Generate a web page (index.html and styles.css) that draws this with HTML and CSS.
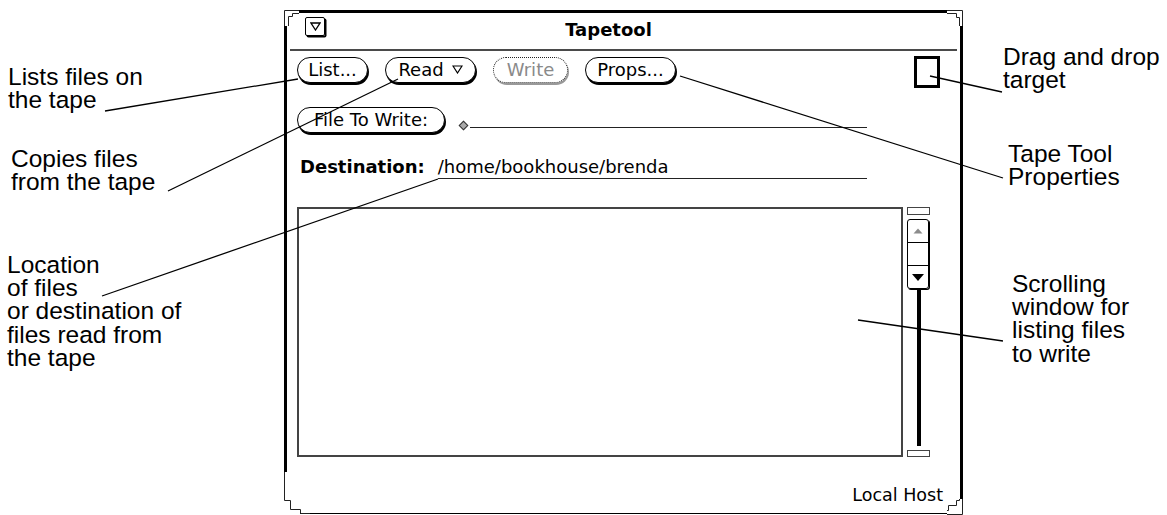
FILE: index.html
```html
<!DOCTYPE html>
<html lang="en">
<head>
    <meta charset="UTF-8">
    <title>Tapetool</title>
    <link rel="stylesheet" href="styles.css">
</head>
<body>
<div class="page">

    <div class="notes notes-left">
        <p class="note note-list">Lists files on<br>the tape</p>
        <p class="note note-read">Copies files<br>from the tape</p>
        <p class="note note-dest">Location<br>of files<br>or destination of<br>files read from<br>the tape</p>
    </div>

    <div class="window">
        <div class="titlebar">
            <span class="menu-mark">
                <svg width="11" height="9" viewBox="0 0 11 9"><polygon points="1,1 10,1 5.5,8" fill="none" stroke="#000" stroke-width="1.3"/></svg>
            </span>
            <span class="title">Tapetool</span>
        </div>
        <div class="rule"></div>

        <div class="controls">
            <button class="btn btn-list">List...</button>
            <button class="btn btn-read">Read
                <svg class="btn-arrow" width="11" height="9" viewBox="0 0 11 9"><polygon points="1,1 10,1 5.5,8" fill="none" stroke="#000" stroke-width="1.2"/></svg>
            </button>
            <button class="btn btn-write">Write</button>
            <button class="btn btn-props">Props...</button>
            <span class="drop-target"></span>
        </div>

        <div class="file-row">
            <button class="btn btn-file">File To Write:</button>
            <span class="diamond"></span>
            <span class="field"></span>
        </div>

        <div class="dest-row">
            <span class="dest-label">Destination:</span>
            <span class="dest-value">/home/bookhouse/brenda</span>
        </div>

        <div class="list-area">
            <div class="listbox"></div>
            <div class="scrollbar">
                <span class="anchor"></span>
                <div class="elevator">
                    <span class="cell">
                        <svg width="10" height="6" viewBox="0 0 10 6"><polygon points="5,0.5 9.5,5.5 0.5,5.5" fill="#8c8c8c"/></svg>
                    </span>
                    <span class="cell"></span>
                    <span class="cell">
                        <svg width="12" height="7" viewBox="0 0 12 7"><polygon points="0,0 12,0 6,7" fill="#000"/></svg>
                    </span>
                </div>
                <span class="cable"></span>
                <span class="anchor anchor-bottom"></span>
            </div>
        </div>

        <div class="footer">Local Host</div>
    </div>

    <div class="notes notes-right">
        <p class="note note-drag">Drag and drop<br>target</p>
        <p class="note note-props">Tape Tool<br>Properties</p>
        <p class="note note-scroll">Scrolling<br>window for<br>listing files<br>to write</p>
    </div>

    <!-- leader lines and window corners -->
    <svg class="leaders" width="1167" height="515" viewBox="0 0 1167 515">
        <g stroke="#000" stroke-width="1.3" fill="none">
            <line x1="105" y1="111" x2="298" y2="79"/>
            <line x1="168" y1="191" x2="398" y2="79"/>
            <line x1="102" y1="296" x2="438" y2="179"/>
            <line x1="930" y1="76" x2="1002" y2="92"/>
            <line x1="680" y1="76" x2="1003" y2="178"/>
            <line x1="858" y1="320" x2="1003" y2="341"/>
        </g>
        <g fill="#fff" stroke="none">
            <rect x="283" y="9" width="16" height="17"/>
            <rect x="947" y="9" width="17" height="17"/>
            <rect x="283" y="472" width="5" height="43"/>
            <rect x="283" y="499" width="17" height="16"/>
            <rect x="947" y="499" width="17" height="16"/>
        </g>
        <g stroke="#222" stroke-width="1" fill="none">
            <polyline points="284.5,26 284.5,10.5 299,10.5"/>
            <polyline points="288.5,26 288.5,16.5 292.5,16.5 292.5,13.5 299,13.5"/>
            <polyline points="947,10.5 962.5,10.5 962.5,26"/>
            <polyline points="947,13.5 956.5,13.5 956.5,17.5 959.5,17.5 959.5,26"/>
            <polyline points="284.5,472 284.5,500.5 290.5,500.5 290.5,509.5 300.5,509.5 300.5,513.5 310,513.5"/>
            <polyline points="962.5,499 962.5,514.5 947,514.5"/>
            <polyline points="959.5,499 959.5,500.5 956.5,500.5 956.5,505.5 948.5,505.5 948.5,510.5 947,510.5"/>
        </g>
    </svg>

</div>
</body>
</html>
```

FILE: styles.css
```css
body {
    margin: 0;
    background: #fff;
    color: #000;
    font-family: "Liberation Sans", Arial, sans-serif;
}
.page {
    position: relative;
    display: flex;
    width: 1167px;
    height: 515px;
    overflow: hidden;
}
.notes {
    flex: none;
}
.notes-left {
    width: 284px;
    padding-left: 8px;
    box-sizing: border-box;
}
.note {
    margin: 0;
    font-size: 24.5px;
    line-height: 23.4px;
}
.note-list {
    margin-top: 65px;
}
.note-read {
    margin-top: 35px;
    margin-left: 3px;
}
.note-dest {
    margin-top: 59px;
    margin-left: -1px;
}
.note-drag {
    margin-top: 45px;
    margin-left: 40px;
}
.note-props {
    margin-top: 50px;
    margin-left: 45px;
}
.note-scroll {
    margin-top: 83px;
    margin-left: 49px;
}

.window {
    flex: none;
    width: 679px;
    height: 504px;
    margin-top: 10px;
    box-sizing: border-box;
    border: 3px solid #000;
    border-bottom-width: 1px;
    display: flex;
    flex-direction: column;
    font-family: "DejaVu Sans", sans-serif;
    font-size: 18px;
}
.titlebar {
    display: flex;
    align-items: flex-start;
    height: 36px;
    padding-right: 68px;
    flex: none;
}
.menu-mark {
    flex: none;
    width: 20px;
    height: 19px;
    margin: 4px 0 0 18px;
    box-sizing: border-box;
    border: 1px solid #000;
    border-radius: 2px;
    box-shadow: 1.5px 1.5px 0 #000;
    display: flex;
    align-items: center;
    justify-content: center;
}
.title {
    flex: 1;
    text-align: center;
    font-weight: bold;
    line-height: 20px;
    padding-top: 7px;
}
.rule {
    flex: none;
    height: 2px;
    margin: 0 3px;
    background: #4a4a4a;
}

.controls {
    display: flex;
    align-items: flex-start;
    gap: 17px;
    height: 32px;
    margin-top: 5px;
    padding: 0 20px 0 10px;
    flex: none;
}
.btn {
    height: 26px;
    margin-top: 1px;
    padding: 0 0 1px;
    box-sizing: border-box;
    border: 1px solid #000;
    border-radius: 13px;
    box-shadow: 1px 2px 0 #000;
    background: #fff;
    color: #000;
    font: 18px/22px "DejaVu Sans", sans-serif;
    display: flex;
    align-items: center;
    justify-content: center;
    flex: none;
}
.btn-list { width: 71px; }
.btn-read { width: 91px; }
.btn-write {
    width: 75px;
    border: 1px dotted #222;
    box-shadow: 1px 2px 0 #999;
    color: #8a8a8a;
}
.btn-props { width: 91px; }
.btn-file { width: 148px; margin-top: 0; }
.btn-arrow {
    margin-left: 8px;
}
.drop-target {
    margin-left: auto;
    width: 26px;
    height: 32px;
    box-sizing: border-box;
    border: 3px solid #000;
}

.file-row {
    display: flex;
    align-items: flex-start;
    height: 28px;
    margin-top: 19px;
    padding-left: 10px;
    flex: none;
}
.diamond {
    width: 5px;
    height: 5px;
    margin: 15px 0 0 15px;
    border: 1px solid #333;
    background: #aaa;
    transform: rotate(45deg);
    flex: none;
}
.field {
    flex: 1;
    height: 20px;
    margin: 0 93px 0 3px;
    border-bottom: 1.5px solid #222;
}

.dest-row {
    display: flex;
    align-items: baseline;
    margin-top: 21px;
    padding: 0 93px 0 13px;
    line-height: 22px;
    flex: none;
}
.dest-label {
    font-weight: bold;
    margin-right: 13px;
}
.dest-value {
    flex: 1;
    border-bottom: 1.5px solid #222;
}

.list-area {
    display: flex;
    height: 250px;
    margin-top: 28px;
    padding-left: 10px;
    flex: none;
}
.listbox {
    width: 606px;
    box-sizing: border-box;
    border: 2px solid #444;
}
.scrollbar {
    width: 23px;
    margin-left: 4px;
    display: flex;
    flex-direction: column;
    align-items: center;
}
.anchor {
    flex: none;
    width: 23px;
    height: 8px;
    box-sizing: border-box;
    border: 1.5px solid #444;
}
.anchor-bottom {
    height: 7px;
    margin-top: 4px;
}
.elevator {
    flex: none;
    align-self: flex-start;
    width: 22px;
    height: 70px;
    margin-top: 4px;
    box-sizing: border-box;
    border: 1px solid #000;
    border-radius: 3px;
    box-shadow: 1px 1px 0 #000;
    display: flex;
    flex-direction: column;
}
.cell {
    flex: 1;
    display: flex;
    align-items: center;
    justify-content: center;
}
.cell + .cell {
    border-top: 1px solid #000;
}
.cable {
    flex: 1;
    width: 4px;
    background: #000;
}

.footer {
    margin-top: 27px;
    padding-right: 17px;
    text-align: right;
    font-size: 17.5px;
    line-height: 22px;
}

.leaders {
    position: absolute;
    left: 0;
    top: 0;
    pointer-events: none;
}
```
